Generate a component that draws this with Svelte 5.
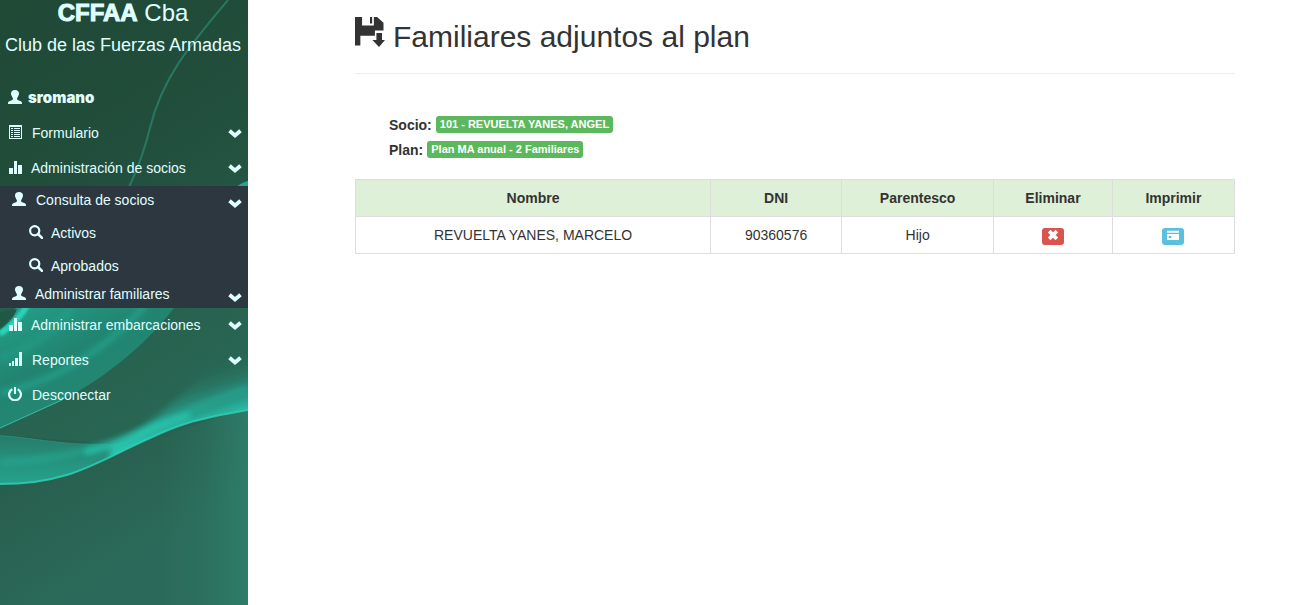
<script>
  const menuTop = [
    { icon: 'list', text: 'Formulario', more: true },
    { icon: 'stats', text: 'Administración de socios', more: true, tight: true }
  ];
  const menuBottom = [
    { icon: 'stats', text: 'Administrar embarcaciones', more: true, tight: true },
    { icon: 'signal', text: 'Reportes', more: true },
    { icon: 'off', text: 'Desconectar' }
  ];
  const columns = [
    { title: 'Nombre', width: 40.4 },
    { title: 'DNI', width: 14.9 },
    { title: 'Parentesco', width: 17.3 },
    { title: 'Eliminar', width: 13.5 },
    { title: 'Imprimir', width: 13.9 }
  ];
  const relatives = [{ name: 'REVUELTA YANES, MARCELO', dni: '90360576', kinship: 'Hijo' }];
</script>

{#snippet icon(name)}
  <svg class="icon" viewBox="0 0 14 14" aria-hidden="true">
    {#if name === 'user'}
      <path d="M7 0C4.500 0 3 1.400 3 3.500c0 1.200.4 1.800.8 2.400.2 1 .6 1.700 1.100 2.100v1c0 .6-.5.900-1.100 1.200L1.200 11.300C.4 11.700 0 12.200 0 13v1h14v-1c0-.8-.4-1.300-1.200-1.700L10.200 10.200c-.6-.3-1.100-.6-1.100-1.200V8c.5-.4.9-1.100 1.100-2.100.4-.6.8-1.200.8-2.400C11 1.400 9.500 0 7 0z" />
    {:else if name === 'list'}
      <path fill-rule="evenodd" d="M1 0h13v14H1zM2 2v11h11V2zM3 3h2v1H3zm3 0h6v1H6zM3 5h2v1H3zm3 0h6v1H6zM3 7h2v1H3zm3 0h6v1H6zM3 9h2v1H3zm3 0h6v1H6zM3 11h2v1H3zm3 0h6v1H6z" />
    {:else if name === 'stats'}
      <path d="M1 8h4v6H1zM6 1h3v13H6zM10 5h4v9h-4z" />
    {:else if name === 'signal'}
      <path d="M1 11h2v3H1zM4 9h2v5H4zM7 6h3v8H7zM11 0h3v14h-3z" />
    {:else if name === 'off'}
      <path d="M4.300 2.200A5.900 5.900 0 1 0 9.700 2.200" fill="none" stroke="currentColor" stroke-width="2.200" />
      <path d="M6 0h2v7H6z" />
    {:else if name === 'search'}
      <circle cx="5.700" cy="5.700" r="4.600" fill="none" stroke="currentColor" stroke-width="2.200" />
      <path d="M9 9l4 3.900" stroke="currentColor" stroke-width="2.600" stroke-linecap="round" />
    {:else if name === 'chevron'}
      <path d="M1.500 4.700L7 9.500l5.500-4.800" fill="none" stroke="currentColor" stroke-width="3.800" />
    {:else if name === 'save'}
      <path d="M0 0h3.300v4H8.800V0h1.500l3 2.700v3.600H9.300v2.400H2.500v4.600H0zM7 0h1v3H7zM10 7.500h2.600v3.200H14L11.200 14 8.100 10.700H10z" />
    {:else if name === 'remove'}
      <path d="M2.500 2.500l9 9m0-9l-9 9" stroke="currentColor" stroke-width="4.200" />
    {:else if name === 'card'}
      <path fill-rule="evenodd" d="M0 2h14v2.300H0zM0 5.800h14v7H0zM2 8.200v2.300h3V8.200z" />
    {/if}
  </svg>
{/snippet}

{#snippet row(item)}
  <li>
    <a class="item" class:tight={item.tight} href="#menu">
      {@render icon(item.icon)}
      <span>{item.text}</span>
      {#if item.more}<span class="arrow">{@render icon('chevron')}</span>{/if}
    </a>
  </li>
{/snippet}

<div class="page">
  <aside>
    <svg class="backdrop" viewBox="0 0 248 605" preserveAspectRatio="xMidYMin slice" aria-hidden="true">
      <defs>
        <linearGradient id="base" x1="0" y1="0" x2="0.25" y2="1">
          <stop offset="0" stop-color="#204936" />
          <stop offset="0.3" stop-color="#214d3b" />
          <stop offset="0.7" stop-color="#285b49" />
          <stop offset="1" stop-color="#2b6a5a" />
        </linearGradient>
        <linearGradient id="edge" gradientUnits="userSpaceOnUse" x1="160" y1="0" x2="248" y2="0">
          <stop offset="0" stop-color="#2f8570" stop-opacity="0" />
          <stop offset="0.5" stop-color="#2f8570" stop-opacity="0.2" />
          <stop offset="1" stop-color="#2f8570" stop-opacity="0.7" />
        </linearGradient>
        <linearGradient id="wing" x1="0" y1="0" x2="0.7" y2="1">
          <stop offset="0" stop-color="#25a38c" />
          <stop offset="0.45" stop-color="#218470" />
          <stop offset="1" stop-color="#278a75" />
        </linearGradient>
        <linearGradient id="wave" x1="0" y1="0" x2="0" y2="1">
          <stop offset="0" stop-color="#279079" stop-opacity="0.3" />
          <stop offset="0.6" stop-color="#25907c" />
          <stop offset="1" stop-color="#25a28c" />
        </linearGradient>
        <linearGradient id="tail" gradientUnits="userSpaceOnUse" x1="180" y1="375" x2="196" y2="428">
          <stop offset="0" stop-color="#26a894" stop-opacity="0" />
          <stop offset="0.3" stop-color="#26a894" stop-opacity="0.15" />
          <stop offset="0.75" stop-color="#26a894" stop-opacity="0.85" />
          <stop offset="1" stop-color="#2bc8b0" />
        </linearGradient>
        <filter id="soft" x="-20%" y="-20%" width="140%" height="140%"><feGaussianBlur stdDeviation="3" /></filter>
        <filter id="fine" x="-20%" y="-20%" width="140%" height="140%"><feGaussianBlur stdDeviation="1" /></filter>
        <clipPath id="above"><path d="M0 0H248V410C190 420 176 426 150 438C96 462 70 484 0 484z" /></clipPath>
      </defs>
      <rect width="248" height="605" fill="url(#base)" />
      <path d="M0 308H248V410Q170 428 110 443Q60 440 0 435z" fill="#28705d" opacity="0.4" />
      <path d="M248 410V605H100V470Q190 420 248 410z" fill="url(#edge)" />
      <path d="M228 0C190 45 162 78 150 128Q142 160 129 187" fill="none" stroke="#287763" stroke-width="2" />
      <path d="M236 187Q243 182 248 181V187z" fill="#27a48f" />
      <path d="M0 325Q10 310 28 300H180C155 335 112 375 62 400L0 428z" fill="url(#wing)" />
      <path d="M0 312L17 309Q14 319 0 330z" fill="#205846" />
      <path d="M28 304Q18 322 0 334" fill="none" stroke="#2ad2ba" stroke-width="6" filter="url(#fine)" />
      <path d="M145 306C105 350 55 382 0 393" fill="none" stroke="#25b39e" stroke-width="5" opacity="0.65" filter="url(#soft)" />
      <path d="M72 306Q52 340 0 360" fill="none" stroke="#27b29b" stroke-width="9" opacity="0.25" filter="url(#soft)" />
      <path d="M0 428L62 400" stroke="#36bfa7" stroke-width="1" />
      <g clip-path="url(#above)">
        <path d="M0 435C38 438 64 446 108 444Q140 442 182 419V484H0z" fill="url(#wave)" />
        <path d="M0 436C38 438 64 446 108 444" fill="none" stroke="#298b77" />
        <path d="M255 330C206 365 166 420 110 446V484H255z" fill="url(#tail)" filter="url(#soft)" />
        <path d="M0 462C75 460 120 440 172 418Q207 401 248 388" fill="none" stroke="#28c5ae" stroke-width="5" opacity="0.4" filter="url(#soft)" />
        <path d="M85 452Q115 446 140 434Q165 422 190 415" fill="none" stroke="#2bd8bf" stroke-width="5" opacity="0.8" filter="url(#soft)" />
      </g>
      <path d="M0 484C70 484 96 462 150 438C176 426 190 420 248 410" fill="none" stroke="#2bd0b8" stroke-width="2" opacity="0.85" />
    </svg>

    <header>
      <div class="brand"><strong>CFFAA</strong> Cba</div>
      <div class="club">Club de las Fuerzas Armadas</div>
    </header>

    <nav>
      <ul>
        <li><a class="item account" href="#cuenta">{@render icon('user')}<strong>sromano</strong></a></li>
        {#each menuTop as item}{@render row(item)}{/each}
        <li>
          <ul class="submenu">
            <li><a class="item sub first" href="#consulta">{@render icon('user')}<span>Consulta de socios</span><span class="arrow low">{@render icon('chevron')}</span></a></li>
            <li><a class="item leaf" href="#activos">{@render icon('search')}<span>Activos</span></a></li>
            <li><a class="item leaf" href="#aprobados">{@render icon('search')}<span>Aprobados</span></a></li>
            <li><a class="item sub last" href="#familiares">{@render icon('user')}<span>Administrar familiares</span><span class="arrow low">{@render icon('chevron')}</span></a></li>
          </ul>
        </li>
        {#each menuBottom as item}{@render row(item)}{/each}
      </ul>
    </nav>
  </aside>

  <main>
    <h1>{@render icon('save')}<span>Familiares adjuntos al plan</span></h1>

    <div class="summary">
      <div><b>Socio:</b><span class="label">101 - REVUELTA YANES, ANGEL</span></div>
      <div><b>Plan:</b><span class="label">Plan MA anual - 2 Familiares</span></div>
    </div>

    <table>
      <colgroup>
        {#each columns as column}<col style="width: {column.width}%" />{/each}
      </colgroup>
      <thead>
        <tr>{#each columns as column}<th scope="col">{column.title}</th>{/each}</tr>
      </thead>
      <tbody>
        {#each relatives as person}
          <tr>
            <td>{person.name}</td>
            <td>{person.dni}</td>
            <td>{person.kinship}</td>
            <td><button class="danger" type="button" aria-label="Eliminar">{@render icon('remove')}</button></td>
            <td><button class="info" type="button" aria-label="Imprimir">{@render icon('card')}</button></td>
          </tr>
        {/each}
      </tbody>
    </table>
  </main>
</div>

<style>
  :global(body) {
    margin: 0;
    background: #fff;
  }
  .page {
    display: flex;
    min-height: 100vh;
    font: 14px/20px "Liberation Sans", Arial, sans-serif;
    color: #333;
  }
  .icon {
    width: 14px;
    height: 14px;
    flex: none;
    fill: currentColor;
  }
  aside {
    position: relative;
    flex: none;
    width: 248px;
    background: #285b49;
    color: #e0ffff;
  }
  .backdrop {
    position: absolute;
    inset: 0;
    width: 100%;
    height: 100%;
  }
  header,
  nav {
    position: relative;
  }
  header {
    padding-bottom: 23px;
    text-align: center;
    white-space: nowrap;
  }
  .brand {
    padding-right: 2px;
    font-size: 24px;
    line-height: 26px;
  }
  .brand strong {
    -webkit-text-stroke: 1px currentColor;
  }
  .club {
    padding-right: 2px;
    font-size: 18px;
    line-height: 32px;
    padding-top: 3px;
    height: 29px;
  }
  ul {
    margin: 0;
    padding: 0;
    list-style: none;
  }
  .item {
    display: flex;
    align-items: center;
    gap: 10px;
    height: 35px;
    padding: 0 6px 2px 8px;
    box-sizing: border-box;
    color: inherit;
    text-decoration: none;
    white-space: nowrap;
  }
  .item > .icon {
    margin-bottom: 2px;
  }
  .tight {
    gap: 9px;
  }
  .account {
    gap: 6px;
  }
  .account strong {
    font-family: Inter, "Liberation Sans", sans-serif;
    font-size: 15px;
    font-weight: 900;
  }
  .arrow {
    display: flex;
    margin-left: auto;
  }
  .low {
    padding-top: 6px;
  }
  .submenu {
    background: #2c3740;
  }
  .sub {
    padding-left: 12px;
  }
  .first {
    height: 30px;
  }
  .leaf {
    height: 33px;
    padding-bottom: 0;
    padding-left: 29px;
    gap: 8px;
  }
  .last {
    height: 26px;
    gap: 9px;
  }
  main {
    flex: 1;
    padding: 16px 55px 0 107px;
  }
  h1 {
    display: flex;
    gap: 8px;
    margin: 0;
    padding-bottom: 16px;
    border-bottom: 1px solid #eee;
    font-size: 30px;
    line-height: 41px;
    font-weight: 400;
  }
  h1 .icon {
    width: 30px;
    height: 32px;
  }
  .summary {
    padding: 38px 34px 17px;
  }
  .summary div {
    display: flex;
    align-items: center;
    gap: 4px;
    height: 25px;
  }
  .label {
    padding: 0 4px;
    border-radius: 3px;
    background: #5cb85c;
    color: #fff;
    font-size: 11px;
    line-height: 17px;
    font-weight: 700;
  }
  table {
    width: 100%;
    border-collapse: collapse;
    table-layout: fixed;
    text-align: center;
  }
  th,
  td {
    height: 20px;
    padding: 8px;
    border: 1px solid #ddd;
  }
  th {
    background: #dff0d8;
  }
  td {
    line-height: 20px;
  }
  button {
    display: inline-flex;
    align-items: center;
    justify-content: center;
    height: 17px;
    padding: 0 5px 2px;
    border: 0;
    border-radius: 3px;
    color: #fff;
    vertical-align: middle;
  }
  button .icon {
    width: 12px;
    height: 12px;
  }
  .danger {
    background: #d9534f;
  }
  .info {
    background: #5bc0de;
  }
</style>
